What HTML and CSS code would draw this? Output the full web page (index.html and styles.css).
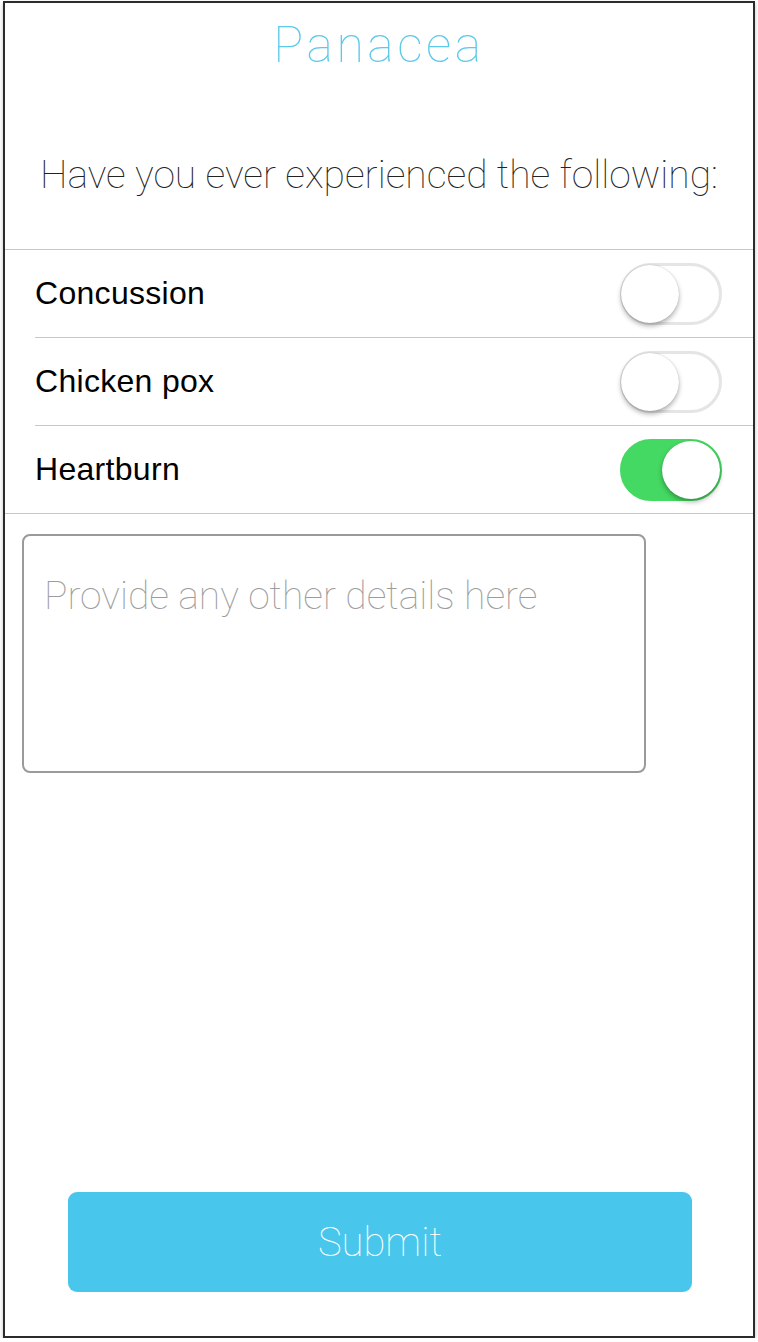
FILE: index.html
```html
<!DOCTYPE html>
<html lang="en">
<head>
    <meta charset="UTF-8">
    <meta name="viewport" content="width=device-width, initial-scale=1.0">
    <title>Panacea</title>
    <link rel="stylesheet" href="styles.css">
</head>
<body>
    <div class="frame">
        <h1 class="title">Panacea</h1>
        <p class="question">Have you ever experienced the following:</p>

        <ul class="conditions">
            <li class="condition">
                <span>Concussion</span>
                <label class="switch"><input type="checkbox"><span class="track"></span></label>
            </li>
            <li class="condition">
                <span>Chicken pox</span>
                <label class="switch"><input type="checkbox"><span class="track"></span></label>
            </li>
            <li class="condition">
                <span>Heartburn</span>
                <label class="switch"><input type="checkbox" checked><span class="track"></span></label>
            </li>
        </ul>

        <textarea class="details" placeholder="Provide any other details here"></textarea>

        <div class="spacer"></div>
        <button class="submit" type="button">Submit</button>
    </div>
</body>
</html>
```

FILE: styles.css
```css
body {
    margin: 0;
    padding: 0;
    background: #fff;
    font-family: "Liberation Sans", Arial, sans-serif;
}
.frame {
    margin: 1px 0 0 3px;
    width: 748px;
    height: 1333px;
    border: 2px solid #2b2b2b;
    box-shadow: 0 2px 4px rgba(0, 0, 0, 0.25);
    display: flex;
    flex-direction: column;
    box-sizing: content-box;
}
.title {
    margin: 13px 0 0;
    text-align: center;
    font-family: Roboto, sans-serif;
    font-weight: 100;
    font-size: 50px;
    line-height: 58px;
    letter-spacing: 3.5px;
    color: #5cc9ea;
}
.question {
    margin: 78px 0 0;
    text-align: center;
    font-family: Roboto, sans-serif;
    font-weight: 100;
    font-size: 39px;
    line-height: 46px;
    color: #222;
}
.conditions {
    list-style: none;
    margin: 51px 0 0;
    padding: 0;
    border-top: 1px solid #c8c8c8;
    border-bottom: 1px solid #c8c8c8;
}
.condition {
    height: 87px;
    margin-left: 30px;
    padding-right: 31px;
    display: flex;
    align-items: center;
    justify-content: space-between;
    font-size: 32px;
    letter-spacing: 0.3px;
    color: #000;
}
.condition + .condition {
    border-top: 1px solid #c8c8c8;
}
.switch {
    position: relative;
    width: 102px;
    height: 62px;
}
.switch input {
    display: none;
}
.track {
    display: block;
    box-sizing: border-box;
    width: 102px;
    height: 62px;
    border-radius: 31px;
    border: 3px solid #e5e5e5;
    background: #fff;
}
.track::after {
    content: "";
    position: absolute;
    top: 2px;
    left: 1px;
    width: 58px;
    height: 58px;
    border-radius: 50%;
    background: #fff;
    box-shadow: 0 3px 5px rgba(0, 0, 0, 0.3), 0 0 1px rgba(0, 0, 0, 0.25);
}
.switch input:checked + .track {
    background: #44d962;
    border-color: #44d962;
}
.switch input:checked + .track::after {
    left: 42px;
}
.details {
    margin: 20px 0 0 17px;
    width: 624px;
    height: 239px;
    box-sizing: border-box;
    border: 2px solid #9a9a9a;
    border-radius: 8px;
    padding: 37px 20px;
    resize: none;
    font-family: Roboto, sans-serif;
    font-weight: 100;
    font-size: 39px;
    color: #333;
}
.details::placeholder {
    color: #9c9c9c;
}
.spacer {
    flex: 1;
}
.submit {
    margin: 0 0 44px 63px;
    width: 624px;
    height: 100px;
    border: none;
    border-radius: 9px;
    background: #48c6eb;
    color: #fff;
    font-family: Roboto, sans-serif;
    font-weight: 100;
    font-size: 40px;
    cursor: pointer;
}
```
